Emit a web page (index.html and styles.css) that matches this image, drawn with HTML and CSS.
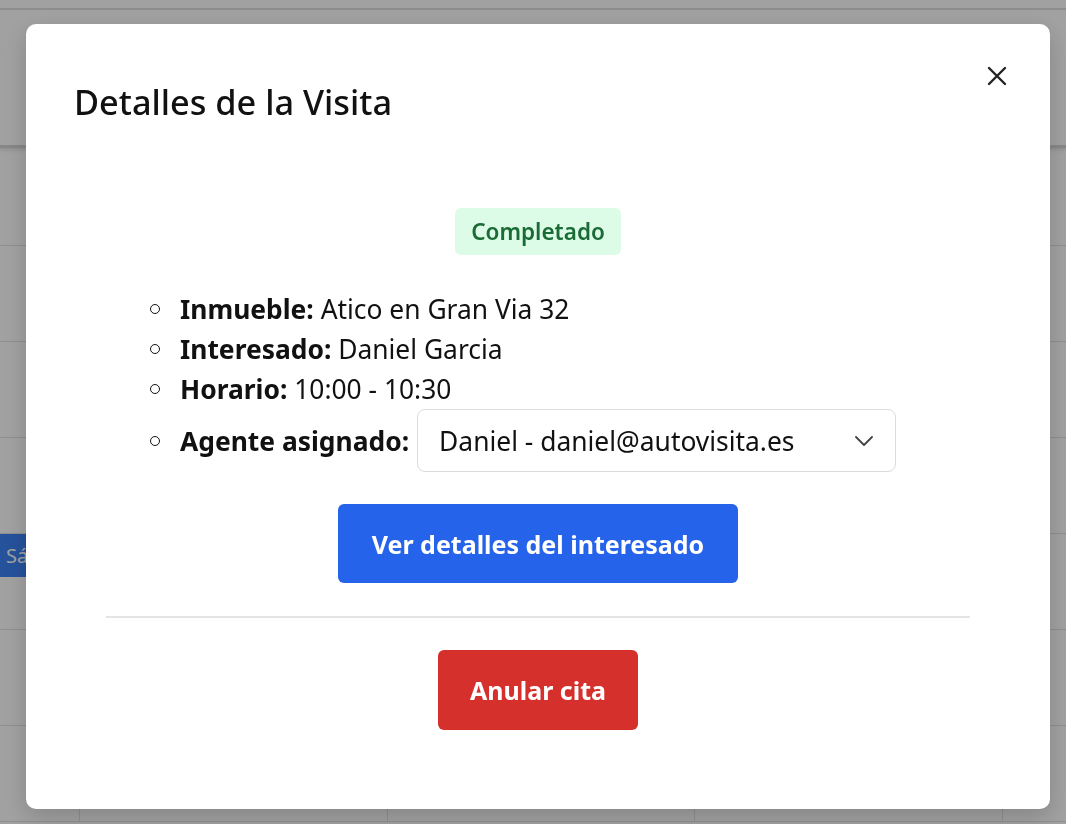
FILE: index.html
```html
<!DOCTYPE html>
<html lang="es">
<head>
<meta charset="utf-8">
<title>Detalles de la Visita</title>
<link rel="stylesheet" href="styles.css">
</head>
<body>
<div class="calendar">
  <div class="cal-header"><div class="cal-topbar"></div></div>
  <div class="cal-row first"><div class="cell time"></div><div class="cell"></div><div class="cell"></div><div class="cell"></div><div class="cell"></div></div>
  <div class="cal-row"><div class="cell time"></div><div class="cell"></div><div class="cell"></div><div class="cell"></div><div class="cell"></div></div>
  <div class="cal-row"><div class="cell time"></div><div class="cell"></div><div class="cell"></div><div class="cell"></div><div class="cell"></div></div>
  <div class="cal-row"><div class="cell time"></div><div class="cell"></div><div class="cell"></div><div class="cell"></div><div class="cell"></div></div>
  <div class="cal-row"><div class="cell time"><div class="event">Sábado</div></div><div class="cell"></div><div class="cell"></div><div class="cell"></div><div class="cell"></div></div>
  <div class="cal-row"><div class="cell time"></div><div class="cell"></div><div class="cell"></div><div class="cell"></div><div class="cell"></div></div>
  <div class="cal-row"><div class="cell time"></div><div class="cell"></div><div class="cell"></div><div class="cell"></div><div class="cell"></div></div>
</div>

<div class="overlay">
  <div class="modal">
    <div class="modal-header">
      <h2 class="modal-title">Detalles de la Visita</h2>
      <button class="close-btn" aria-label="Cerrar">
        <svg width="20" height="20" viewBox="0 0 20 20"><path d="M2 2 L18 18 M18 2 L2 18" stroke="#222" stroke-width="2.4" stroke-linecap="round" fill="none"/></svg>
      </button>
    </div>
    <div class="modal-body">
      <span class="badge">Completado</span>
      <ul class="details">
        <li><strong>Inmueble:</strong>&nbsp;Atico en Gran Via 32</li>
        <li><strong>Interesado:</strong>&nbsp;Daniel Garcia</li>
        <li><strong>Horario:</strong>&nbsp;10:00 - 10:30</li>
        <li class="agent"><strong>Agente asignado:</strong>
          <div class="select">
            <span>Daniel - daniel@autovisita.es</span>
            <svg width="18" height="10" viewBox="0 0 18 10"><path d="M1 1 L9 9 L17 1" stroke="#444" stroke-width="1.8" fill="none" stroke-linecap="round" stroke-linejoin="round"/></svg>
          </div>
        </li>
      </ul>
      <button class="btn btn-blue">Ver detalles del interesado</button>
      <div class="divider"></div>
      <button class="btn btn-red">Anular cita</button>
    </div>
  </div>
</div>
</body>
</html>
```

FILE: styles.css
```css
* { box-sizing: border-box; }

html, body {
  margin: 0;
  padding: 0;
  width: 1066px;
  height: 824px;
  overflow: hidden;
  background: #ffffff;
  font-family: "Noto Sans", "Open Sans", sans-serif;
}

/* background calendar */
.calendar {
  width: 1066px;
  height: 824px;
  overflow: hidden;
  display: flex;
  flex-direction: column;
}
.cal-header {
  height: 148px;
  flex: none;
  border-bottom: 3px solid #d6d6d6;
  box-shadow: 0 2px 4px rgba(0,0,0,0.12);
}
.cal-topbar {
  height: 10px;
  border-bottom: 2px solid #e0e0e0;
}
.cal-row {
  display: flex;
  flex: none;
  height: 96px;
  border-bottom: 1px solid #e3e3e3;
}
.cal-row.first { height: 98px; }
.cell {
  width: 307.67px;
  flex: none;
  border-right: 1px solid #e3e3e3;
}
.cell.time {
  width: 80px;
}
.event {
  height: 43px;
  width: 120px;
  background: #3b82f6;
  color: #fff;
  font-size: 20px;
  line-height: 43px;
  padding-left: 6px;
  white-space: nowrap;
}

/* overlay + modal */
.overlay {
  position: fixed;
  inset: 0;
  background: rgba(0, 0, 0, 0.37);
  padding: 24px 16px 15px 26px;
  display: flex;
}
.modal {
  width: 1024px;
  height: 785px;
  background: #fff;
  border-radius: 10px;
  box-shadow: 0 8px 24px rgba(0,0,0,0.18);
  display: flex;
  flex-direction: column;
  color: #111;
}
.modal-header {
  position: relative;
  padding: 58px 48px 0 48px;
}
.modal-title {
  margin: 0;
  font-size: 34.3px;
  line-height: 40px;
  font-weight: 500;
  color: #111;
}
.close-btn {
  position: absolute;
  top: 42px;
  right: 43px;
  width: 20px;
  height: 20px;
  padding: 0;
  border: 0;
  background: none;
  display: flex;
}

.modal-body {
  padding: 86px 80px 0;
  display: flex;
  flex-direction: column;
  align-items: center;
}
.badge {
  display: inline-block;
  background: #dcfce7;
  color: #1b6b36;
  font-size: 22.5px;
  font-weight: 600;
  line-height: 27px;
  padding: 10px 16px;
  border-radius: 6px;
}
.details {
  align-self: stretch;
  list-style: none;
  margin: 34px 0 0 44px;
  padding: 0;
  font-size: 26.4px;
  color: #111;
}
.details li {
  display: flex;
  align-items: center;
  line-height: 40px;
  white-space: nowrap;
}
.details li::before {
  content: "";
  width: 8px;
  height: 8px;
  border: 1.5px solid #111;
  border-radius: 50%;
  margin-right: 20px;
  flex: none;
}
.details strong { font-weight: 700; }
.details li.agent { height: 63px; }
.select {
  margin-left: 8px;
  width: 479px;
  height: 63px;
  border: 1.5px solid #dcdcdc;
  border-radius: 8px;
  display: flex;
  align-items: center;
  justify-content: space-between;
  padding: 0 22px 0 21px;
}

.btn {
  border: 0;
  color: #fff;
  font-family: inherit;
  font-size: 25px;
  font-weight: 700;
  border-radius: 6px;
  cursor: pointer;
}
.btn-blue {
  margin-top: 32px;
  width: 400px;
  height: 79px;
  background: #2563eb;
}
.divider {
  align-self: stretch;
  height: 2px;
  background: #e4e4e4;
  margin-top: 33px;
}
.btn-red {
  margin-top: 32px;
  width: 200px;
  height: 80px;
  background: #d6302c;
}
```
